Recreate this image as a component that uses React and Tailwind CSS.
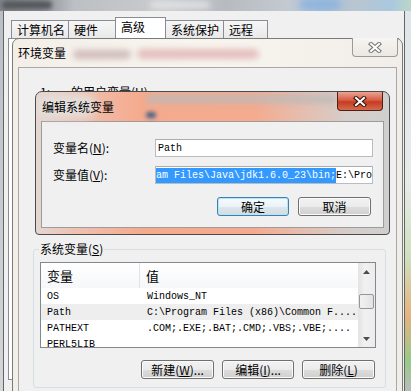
import React from "react";

const CJK = "font-['Noto_Sans_CJK_SC','Noto_Sans',sans-serif]";
const MONO = "font-['Liberation_Mono',monospace]";

function XIcon({ active }) {
  return (
    <svg width="14" height="11" viewBox="0 0 14 11">
      <path d="M3 2 L11 9 M11 2 L3 9" stroke={active ? "#3a1810" : "#7a7a7a"} strokeWidth="4.2" strokeLinecap="square" fill="none" />
      <path d="M3 2 L11 9 M11 2 L3 9" stroke="#ffffff" strokeWidth="2" strokeLinecap="square" fill="none" />
    </svg>
  );
}

function Btn({ children, w, def }) {
  return (
    <div
      className={`flex h-[19px] items-center justify-center rounded-[3px] border text-[12px] leading-none ${w} ${
        def
          ? "border-[#3c7fb1] bg-[linear-gradient(#f4f9fc_0%,#ecf3f8_50%,#dde6ec_51%,#d2dce3_100%)] shadow-[inset_0_0_0_1px_#b9e4f7]"
          : "border-[#707070] bg-[linear-gradient(#f2f2f2_0%,#ebebeb_50%,#dddddd_51%,#cfcfcf_100%)] shadow-[inset_0_0_0_1px_#fbfbfb]"
      }`}
    >
      {children}
    </div>
  );
}

function Arrow({ up }) {
  return (
    <svg width="7" height="4" viewBox="0 0 7 4">
      <path d={up ? "M0 4 L3.5 0 L7 4 Z" : "M0 0 L3.5 4 L7 0 Z"} fill="#4d4d4d" />
    </svg>
  );
}

const tabs = [
  ["计算机名", "w-[58px]", false],
  ["硬件", "w-[48px]", false],
  ["高级", "w-[51px]", true],
  ["系统保护", "w-[59px]", false],
  ["远程", "w-[45px]", false],
];

const rows = [
  ["OS", "Windows_NT", false],
  ["Path", "C:\\Program Files (x86)\\Common F....", true],
  ["PATHEXT", ".COM;.EXE;.BAT;.CMD;.VBS;.VBE;....", false],
  ["PERL5LIB", "", false],
];

export default function App() {
  return (
    <div className={`relative flex h-[391px] w-[411px] flex-col overflow-hidden bg-[#f0f0f0] text-[12px] text-black ${CJK}`}>
      {/* outer window glass title strip */}
      <div className="relative h-[11px] shrink-0 overflow-hidden bg-[linear-gradient(90deg,#80848a_0%,#8f9398_10%,#bcbfc3_18%,#cacbcd_40%,#b7bbc0_55%,#c4cad1_70%,#a2bddb_78%,#b9c5d0_86%,#aac8df_95%,#bcd6c8_100%)]">
        <div className="absolute left-[2px] top-[1px] h-[8px] w-[50px] rounded-full bg-[#55585c] blur-[2px]" />
        <div className="absolute left-[150px] top-[2px] h-[6px] w-[60px] rounded-full bg-[#e4e6e8] blur-[3px]" />
        <div className="absolute left-[300px] top-[0px] h-[9px] w-[40px] rounded-full bg-[#8fb4dc] blur-[3px]" />
      </div>

      {/* outer window body */}
      <div className="flex flex-1">
        <div className="w-[3px] bg-[linear-gradient(#b9bfc6,#d4d6d8)]" />
        <div className="flex flex-1 flex-col border-l border-r border-[#646464] bg-[#f0f0f0]">
          <div className="ml-[7px] mt-[6px] flex h-[21px] items-end">
            {tabs.map(([t, w, sel], i) => (
              <div
                key={t}
                className={`${w} ${i > 0 ? "-ml-px" : ""} flex items-center border border-b-0 pl-[5px] leading-none ${
                  sel
                    ? "relative z-10 h-[21px] border-[#898c95] bg-white pb-[2px]"
                    : "h-[18px] border-[#898c95] bg-[linear-gradient(#f6f6f6,#e9e9e9)]"
                }`}
              >
                {t}
              </div>
            ))}
          </div>
          <div className="ml-[4px] mr-[5px] h-[342px] border border-[#898c95] bg-white" />
        </div>
        <div className="w-[6px] bg-[linear-gradient(#dfe6ea_0%,#e7ecea_45%,#cfe0bd_65%,#e6b37f_80%,#98c98a_92%,#b9bdb9_100%)]" />
      </div>

      {/* 环境变量 dialog */}
      <div className="absolute left-[12px] top-[38px] flex h-[362px] w-[391px] flex-col rounded-t-[7px] border border-[#7a7a7a] bg-[linear-gradient(90deg,#f3efe8,#f8f5ef_50%,#f1eee9)]">
        <div className="relative flex h-[28px] shrink-0 items-center pl-[5px]">
          <span className="relative z-10">环境变量</span>
          <div className="absolute left-[60px] top-[11px] h-[9px] w-[58px] rounded-full bg-[#c7aeb0] opacity-80 blur-[3px]" />
          <div className="absolute left-[124px] top-[10px] h-[10px] w-[122px] rounded-full bg-[#dfb1b3] opacity-80 blur-[3px]" />
          <div className="absolute right-[4px] top-[-1px] flex h-[19px] w-[46px] items-center justify-center rounded-b-[4px] border border-t-0 border-[#9a9a9a] bg-[linear-gradient(#f7f5f1,#ebe8e3)]">
            <XIcon />
          </div>
        </div>
        <div className="mx-[5px] flex-1 border border-[#a8a8a8] bg-[#f0f0f0]">
          <div className="h-[173px] pl-[21px] pt-[16px] leading-[16px]">
            <span>1:</span>
            <span className="ml-[21px]">
              的用户变量(<u>U</u>)
            </span>
          </div>
          <fieldset className="ml-[14px] w-[353px] rounded-[3px] border border-[#d5dfe5] px-0 pb-[8px]">
            <legend className="ml-[5px] px-[1px] leading-[16px]">
              系统变量(<u>S</u>)
            </legend>
            <div className="ml-[6px] mt-[5px] flex h-[86px] w-[336px] overflow-hidden border border-[#828790] bg-white">
              <div className="flex flex-1 flex-col">
                <div className="flex h-[25px] shrink-0 bg-[linear-gradient(#ffffff,#f6f7f9)] text-[13px]">
                  <div className="flex w-[99px] items-center border-r border-[#e2e3e5] pl-[6px]">变量</div>
                  <div className="flex flex-1 items-center pl-[6px]">值</div>
                </div>
                {rows.map(([k, v, hl]) => (
                  <div key={k} className={`flex h-[16px] shrink-0 items-center text-[10px] ${MONO} ${hl ? "bg-[#eeeeee]" : ""}`}>
                    <div className="w-[100px] pl-[6px]">{k}</div>
                    <div className="flex-1 whitespace-nowrap pl-[6px]">{v}</div>
                  </div>
                ))}
              </div>
              <div className="flex w-[17px] flex-col bg-[linear-gradient(90deg,#e3e3e3,#f1f1f1_40%,#ececec)]">
                <div className="flex h-[17px] items-center justify-center">
                  <Arrow up />
                </div>
                <div className="flex-1">
                  <div className="ml-px mt-[14px] h-[15px] w-[15px] rounded-[2px] border border-[#979797] bg-[linear-gradient(90deg,#f2f2f2,#e2e2e2)]" />
                </div>
                <div className="flex h-[17px] items-center justify-center">
                  <Arrow />
                </div>
              </div>
            </div>
            <div className="mt-[12px] flex justify-end gap-[8px] pr-[10px]">
              <Btn w="w-[73px]">
                新建(<u>W</u>)...
              </Btn>
              <Btn w="w-[72px]">
                编辑(<u>I</u>)...
              </Btn>
              <Btn w="w-[73px]">
                删除(<u>L</u>)
              </Btn>
            </div>
          </fieldset>
        </div>
      </div>

      {/* 编辑系统变量 dialog */}
      <div className="absolute left-[35px] top-[91px] flex h-[144px] w-[355px] flex-col overflow-hidden rounded-t-[7px] rounded-b-[4px] border border-[#4b4b4b] bg-[linear-gradient(90deg,#e4d7d2_0%,#eec3b3_10%,#f5aa8c_30%,#f4ab8f_62%,#e7bcac_74%,#d6cdc9_88%,#cfcfcf_100%)]">
        <div className="relative flex h-[29px] shrink-0 items-center pl-[6px]">
          <div className="absolute left-[0px] top-[2px] h-[24px] w-[60px] rounded-full bg-[#e3dedb] blur-[4px]" />
          <div className="absolute left-[110px] top-[3px] h-[8px] w-[190px] rounded-full bg-[#bdb9b7] opacity-90 blur-[3px]" />
          <div className="absolute left-[110px] top-[20px] h-[6px] w-[10px] rounded-full bg-[#3e5f86] blur-[2px]" />
          <span className="relative z-10">编辑系统变量</span>
          <div className="absolute right-[6px] top-0 flex h-[19px] w-[46px] items-center justify-center rounded-b-[4px] border border-t-0 border-[#4e1f15] bg-[linear-gradient(#e9a593_0%,#d95c44_45%,#c43c22_55%,#d56a4f_100%)]">
            <XIcon active />
          </div>
        </div>
        <div className="mx-[5px] h-[107px] shrink-0 border border-[#9c9c9c] bg-[#f0f0f0]">
          <div className="mt-[17px] flex items-center">
            <span className="w-[113px] pl-[11px]">
              变量名(<u>N</u>):
            </span>
            <div className={`flex h-[18px] w-[218px] items-center border border-[#b8bcc3] border-t-[#abadb3] bg-white pl-[2px] text-[10px] ${MONO}`}>
              Path
            </div>
          </div>
          <div className="mt-[9px] flex items-center">
            <span className="w-[113px] pl-[11px]">
              变量值(<u>V</u>):
            </span>
            <div className={`flex h-[18px] w-[218px] items-center overflow-hidden whitespace-nowrap border border-[#b8bcc3] border-t-[#abadb3] bg-white text-[10px] ${MONO}`}>
              <span className="flex h-[15px] items-center bg-[#3399ff] text-white">{"am Files\\Java\\jdk1.6.0_23\\bin;"}</span>
              <span>{"E:\\Pro"}</span>
            </div>
          </div>
          <div className="mt-[13px] flex justify-end gap-[9px] pr-[12px]">
            <Btn w="w-[72px]" def>
              确定
            </Btn>
            <Btn w="w-[73px]">取消</Btn>
          </div>
        </div>
      </div>
    </div>
  );
}
